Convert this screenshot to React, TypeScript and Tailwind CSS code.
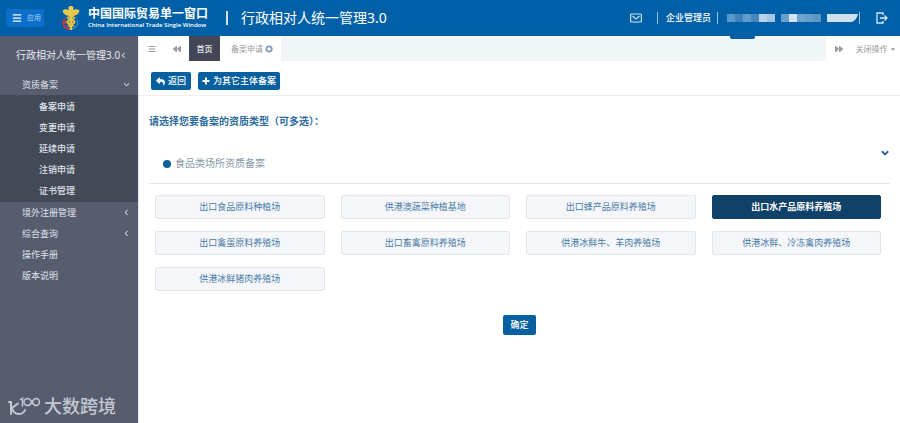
import { useState } from 'react'
import {
  FaBars,
  FaAngleLeft,
  FaAngleDown,
  FaBackward,
  FaForward,
  FaCaretDown,
  FaReply,
} from 'react-icons/fa6'

const FONT = "font-['Noto_Sans','Noto_Sans_CJK_SC',sans-serif]"

interface MenuItem {
  label: string
  children?: string[]
  expandable?: boolean
}

const MENU: MenuItem[] = [
  { label: '资质备案', expandable: true, children: ['备案申请', '变更申请', '延续申请', '注销申请', '证书管理'] },
  { label: '境外注册管理', expandable: true },
  { label: '综合查询', expandable: true },
  { label: '操作手册' },
  { label: '版本说明' },
]

const TYPES = [
  '出口食品原料种植场',
  '供港澳蔬菜种植基地',
  '出口蜂产品原料养殖场',
  '出口水产品原料养殖场',
  '出口禽蛋原料养殖场',
  '出口畜禽原料养殖场',
  '供港冰鲜牛、羊肉养殖场',
  '供港冰鲜、冷冻禽肉养殖场',
  '供港冰鲜猪肉养殖场',
]

// Masked account fields in the header
const MASK_A = ['bg-[#5c97c7]', 'bg-[#3f83bd]', 'bg-[#629bc9]', 'bg-[#4486be]', 'bg-[#b9d3ea]', 'bg-[#a5c6e2]']
const MASK_B = ['bg-[#689fcb]', 'bg-[#d3e4f3]', 'bg-[#70a3cd]', 'bg-[#669dca]', 'bg-[#5c97c7]']

function Emblem() {
  return (
    <svg viewBox="0 0 18 26" className="h-[26px] w-[18px]" aria-hidden="true">
      <path d="M3 13.500c-3.500 4.500-1.500 9.500 4.500 10.500" fill="none" stroke="#c9343f" strokeWidth="2" />
      <path d="M2 17.500c3-1 5 1 5.500 4.500" fill="none" stroke="#d8433c" strokeWidth="2" />
      <path d="M15 15c2 3.500 0 7.500-4.500 9" fill="none" stroke="#3a8fcb" strokeWidth="1.200" />
      <path d="M.5 5.500C3 3.500 5 4 6.500 5h5c1.500-1 3.500-1.500 6 .5-.5 3-2.500 4.500-5 5l-1 1.500h-5l-1-1.500c-2.500-.5-4.500-2-5-5z" fill="#e5c84e" />
      <path d="M6.500 2.500C7.500.5 10.500.5 11.500 2.500L11 6H7z" fill="#efd35a" />
      <path d="M9 4v21" stroke="#eac843" strokeWidth="2.600" />
      <path d="M5.500 12c0 2.500 7 2.500 7 5s-6 2-6 4.500M12.500 12c0 2.500-7 2.500-7 5s6 2 6 4.500" fill="none" stroke="#e4c044" strokeWidth="2" />
    </svg>
  )
}

function Header() {
  return (
    <header className="relative flex h-9 items-center bg-[#0060a7] text-white">
      <button className="ml-[6px] flex h-[18px] w-[38px] items-center gap-[5px] rounded-xs bg-[#0b6fca] pl-[6px] text-[7px] text-[#a9d0f5]">
        <FaBars className="size-[10px] text-white" />
        应用
      </button>
      <div className="ml-[18px] flex items-center gap-2">
        <Emblem />
        <div>
          <p className="text-[12px] leading-[14px] font-bold">中国国际贸易单一窗口</p>
          <p className="font-['Open_Sans',sans-serif] text-[6px] leading-[9px] font-semibold whitespace-nowrap">
            China International Trade Single Window
          </p>
        </div>
      </div>
      <span className="ml-[18px] h-[14px] w-[2px] bg-[#cfe2f3]" />
      <h1 className="ml-[13px] text-[14px] leading-5 whitespace-nowrap">行政相对人统一管理3.0</h1>

      <div className="ml-auto flex items-center text-[9px]">
        <button aria-label="消息">
          <svg viewBox="0 0 12 10" className="h-[10px] w-3" fill="none" stroke="#cfe2f3" strokeWidth="1.200">
            <rect x=".6" y="1" width="10.800" height="8" rx="1" />
            <path d="M2.500 3l3.500 3 3.500-3" />
          </svg>
        </button>
        <span className="ml-[15px] h-3 w-px bg-[#9cc3e3]" />
        <span className="ml-2 font-medium">企业管理员</span>
        <span className="ml-[6px] h-3 w-px bg-[#9cc3e3]" />
        <span className="ml-[9px] flex h-2">
          {MASK_A.map((c, i) => <i key={i} className={`w-2 ${c}`} />)}
        </span>
        <span className="ml-[6px] flex h-2">
          {MASK_B.map((c, i) => <i key={i} className={`w-2 ${c}`} />)}
        </span>
        <svg viewBox="0 0 31 8" className="ml-[6px] h-2 w-[31px]" aria-hidden="true">
          <path d="M0 0h31q-1.500 6-6 8H0z" fill="#cfe1f1" />
        </svg>
        <span className="ml-px h-3 w-px bg-[#9cc3e3]" />
        <button aria-label="退出" className="mr-3 ml-4">
          <svg viewBox="0 0 12 12" className="size-3" fill="none" stroke="#d8e8f6" strokeWidth="1.300">
            <path d="M7 3V1H1v10h6V9M4 6h7M8.500 3.500L11 6 8.500 8.500" />
          </svg>
        </button>
      </div>
      {/* Pull-down handle under the bar */}
      <span className="absolute top-full right-[145px] h-[3px] w-[25px] rounded-b-xs bg-[#0060a7]" />
    </header>
  )
}

function Sidebar() {
  return (
    <aside className="relative w-[138px] shrink-0 bg-[#575d6f] text-[9px] text-[#dfe2ea]">
      <div className="flex h-[38px] items-center pl-4 text-[10px] whitespace-nowrap text-[#e8eaf0]">
        行政相对人统一管理3.0
        <FaAngleLeft className="size-[7px]" />
      </div>
      <nav>
        <ul>
          {MENU.map(item => (
            <li key={item.label}>
              <a href="#" className="flex h-[21px] items-center justify-between pr-2 pl-[22px]">
                {item.label}
                {item.expandable && (item.children
                  ? <FaAngleDown className="size-[7px]" />
                  : <FaAngleLeft className="size-[7px]" />)}
              </a>
              {item.children && (
                <ul className="bg-[#434957] py-px">
                  {item.children.map(child => (
                    <li key={child}>
                      <a href="#" className="flex h-[21px] items-center pl-[39px] font-medium">{child}</a>
                    </li>
                  ))}
                </ul>
              )}
            </li>
          ))}
        </ul>
      </nav>
      <div className="absolute bottom-2 left-2 flex items-center gap-1 text-[#c5c8d0]">
        <svg viewBox="0 0 32 18" className="h-[18px] w-8" fill="none" stroke="currentColor" strokeLinecap="round" strokeLinejoin="round">
          <path d="M1 5h2v12M10 6.500L4 11c1 4 3.500 6 7 6 3 0 5-1.500 6-4" strokeWidth="2" />
          <path d="M12.500 2.500L14.500 1v8" strokeWidth="1.500" />
          <path d="M24 5c-1.500-2.500-3-3.500-4.500-3.500a3.500 3.500 0 0 0 0 7C21 8.500 22.500 7.500 24 5s3-3.500 4-3.500a3.500 3.500 0 0 1 0 7c-1 0-2.500-1-4-3.500z" strokeWidth="1.500" />
        </svg>
        <span className="text-[18px] leading-[18px] font-medium">大数跨境</span>
      </div>
    </aside>
  )
}

function TabBar() {
  return (
    <div className="flex h-[25px] items-stretch bg-[#f0f6f7] text-[#9a9a9a]">
      <button aria-label="菜单" className="flex w-[25px] items-center justify-center bg-white">
        <FaBars className="size-2" />
      </button>
      <button aria-label="向左" className="flex w-[25px] items-center justify-center bg-white">
        <FaBackward className="size-2" />
      </button>
      <button className="w-[31px] bg-[#434655] text-[8px] font-medium text-[#e6e7eb]">首页</button>
      <button className="flex w-[61px] items-center justify-center gap-[2px] bg-white pl-[3px] text-[8px]">
        备案申请
        <svg viewBox="0 0 8 8" className="size-2" aria-hidden="true">
          <circle cx="4" cy="4" r="2.700" fill="none" stroke="#7d97c0" strokeWidth="1.800" />
        </svg>
      </button>
      <button aria-label="向右" className="ml-auto flex w-[25px] items-center justify-center bg-white">
        <FaForward className="size-2" />
      </button>
      <button className="flex w-[49px] items-center justify-center gap-[2px] bg-white text-[8px] whitespace-nowrap">
        关闭操作
        <FaCaretDown className="size-[6px]" />
      </button>
    </div>
  )
}

export default function App() {
  const [selected, setSelected] = useState<string[]>(['出口水产品原料养殖场'])

  const toggle = (name: string) =>
    setSelected(s => (s.includes(name) ? s.filter(n => n !== name) : [...s, name]))

  return (
    <div className={`flex min-h-screen flex-col bg-white ${FONT}`}>
      <Header />
      <div className="flex flex-1">
        <Sidebar />
        <main className="min-w-0 flex-1 border-l border-[#e3e8f5]">
          <TabBar />
          <div className="flex gap-[7px] border-b border-[#ebedf0] px-3 pt-[11px] pb-[5px] text-[9px] font-medium text-white">
            <button className="flex h-[18px] items-center gap-[3px] rounded-xs bg-[#06609f] px-[5px]">
              <FaReply className="size-[9px]" />
              返回
            </button>
            <button className="flex h-[18px] items-center gap-[3px] rounded-xs bg-[#06609f] px-[4px]">
              <svg viewBox="0 0 8 8" className="size-2" stroke="currentColor" strokeWidth="2" aria-hidden="true">
                <path d="M4 .5v7M.5 4h7" />
              </svg>
              为其它主体备案
            </button>
          </div>

          <section className="px-[10px] pt-[15px]">
            <h2 className="text-[10px] leading-5 font-bold text-[#2b6a9b]">请选择您要备案的资质类型（可多选）：</h2>
            <div className="mt-[13px] flex h-10 items-center justify-between border-b border-[#e4e5e7] pr-px pl-[14px]">
              <span className="flex items-center gap-1 text-[10px] text-[#8799a9]">
                <i className="size-2 rounded-full bg-[#0c609b]" />
                食品类场所资质备案
              </span>
              <button aria-label="收起" className="self-start pt-[5px]">
                <svg viewBox="0 0 8 8" className="size-2" fill="none" stroke="#2a6ba3" strokeWidth="2">
                  <path d="M.8 2.200L4 5.400l3.200-3.200" />
                </svg>
              </button>
            </div>

            <div className="mt-[11px] grid grid-cols-4 gap-x-4 gap-y-3 pr-[9px] pl-[6px]">
              {TYPES.map(name => {
                const on = selected.includes(name)
                return (
                  <button
                    key={name}
                    aria-pressed={on}
                    onClick={() => toggle(name)}
                    className={`h-6 rounded-xs border text-[9px] whitespace-nowrap ${
                      on
                        ? 'border-[#104168] bg-[#104168] font-bold text-white'
                        : 'border-[#e2e6eb] bg-[#f4f6fa] text-[#4a7ba5]'
                    }`}
                  >
                    {name}
                  </button>
                )
              })}
            </div>

            <div className="mt-6 flex justify-center">
              <button className="h-5 rounded-xs bg-[#06609f] px-[7px] text-[9px] font-medium text-white">确定</button>
            </div>
          </section>
        </main>
      </div>
    </div>
  )
}
